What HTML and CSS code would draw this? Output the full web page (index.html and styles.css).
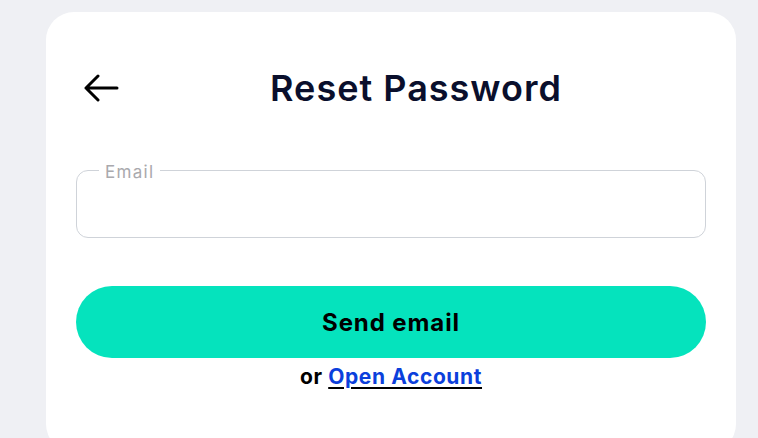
FILE: index.html
```html
<!DOCTYPE html>
<html>
<head>
<meta charset="utf-8">
<link rel="stylesheet" href="styles.css">
</head>
<body>
<div class="card">
  <div class="header">
    <button class="back" aria-label="Back">
      <svg width="36" height="28" viewBox="0 0 36 28"><path d="M34 14H3M15 2L3 14L15 26" fill="none" stroke="#000" stroke-width="3" stroke-linecap="round" stroke-linejoin="round"/></svg>
    </button>
    <h1 class="title">Reset Password</h1>
  </div>
  <fieldset class="field">
    <legend class="label"><span class="label-text">Email</span></legend>
    <input class="input" type="email">
  </fieldset>
  <button class="send">Send email</button>
  <p class="alt">or <a href="#" class="link">Open Account</a></p>
</div>
</body>
</html>
```
FILE: styles.css
```css
html, body { margin: 0; padding: 0; }
body {
  background: #eff0f4;
  font-family: Inter, "Noto Sans", sans-serif;
  height: 438px;
  overflow: hidden;
}
.card {
  margin: 12px 0 0 46px;
  width: 690px;
  height: 440px;
  box-sizing: border-box;
  background: #fff;
  border-radius: 28px;
  padding: 46px 30px 0;
}
.header {
  height: 60px;
  display: flex;
  align-items: center;
}
.back {
  flex: none;
  background: none;
  border: 0;
  padding: 0 0 0 7px;
  width: 50px;
  height: 28px;
  display: flex;
}
.title {
  flex: 1;
  margin: 0;
  line-height: 60px;
  text-align: center;
  font-size: 36px;
  letter-spacing: 1px;
  font-weight: 600;
  color: #0a0f2c;
}
.field {
  margin: 42px 0 0;
  padding: 0 14px;
  height: 78px;
  box-sizing: border-box;
  border: 1px solid #cfd3d9;
  border-radius: 12px;
}
.label {
  padding: 0 6px;
  margin-left: 8px;
  font-size: 17px;
  letter-spacing: 1.3px;
  line-height: 20px;
  color: #a9a9ad;
}
.label-text {
  position: relative;
  top: 2px;
}
.input {
  border: 0;
  outline: none;
  width: 100%;
  height: 46px;
  font-size: 16px;
  background: transparent;
}
.send {
  display: block;
  width: 100%;
  height: 72px;
  margin-top: 48px;
  border: 0;
  border-radius: 36px;
  background: #05e3bd;
  font-family: inherit;
  font-size: 24px;
  letter-spacing: 0.9px;
  font-weight: 700;
  color: #000;
}
.alt {
  margin: 7px 0 0;
  text-align: center;
  font-size: 21px;
  letter-spacing: 0.6px;
  line-height: 24px;
  font-weight: 700;
  color: #000;
}
.link {
  color: #0b3fdc;
  text-decoration-color: #000;
  text-decoration-thickness: 2px;
  text-underline-offset: 3px;
}
```
